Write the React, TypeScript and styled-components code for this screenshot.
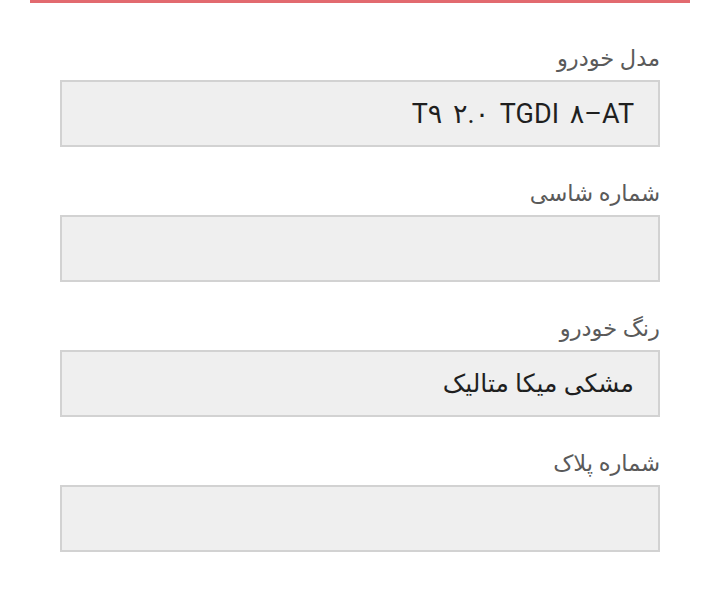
import React from 'react';
import styled, { createGlobalStyle } from 'styled-components';

const GlobalStyle = createGlobalStyle`
  html, body {
    margin: 0;
    padding: 0;
    background: #ffffff;
  }
  body {
    font-family: Roboto, "DejaVu Sans", sans-serif;
  }
`;

const Page = styled.div`
  width: 720px;
  min-height: 612px;
  background: #ffffff;
  direction: rtl;
`;

const TopRule = styled.div`
  height: 3px;
  margin: 0 30px;
  background: #e26a6f;
`;

const Form = styled.div`
  display: flex;
  flex-direction: column;
  gap: 30px;
  padding: 39px 60px 0;
`;

const Field = styled.div`
  display: flex;
  flex-direction: column;
  gap: 6px;
`;

const Label = styled.label`
  display: block;
  height: 32px;
  line-height: 32px;
  font-size: 22.5px;
  color: #5a5a5a;
  text-align: right;
`;

const Box = styled.div`
  box-sizing: border-box;
  height: 67px;
  display: flex;
  align-items: center;
  padding: 0 24px;
  background: #efefef;
  border: 2px solid #d2d2d2;
  color: #1f1f1f;
`;

const Value = styled.span<{ $ltr?: boolean }>`
  direction: ${(p) => (p.$ltr ? 'ltr' : 'rtl')};
  unicode-bidi: isolate;
  font-size: ${(p) => (p.$ltr ? '27px' : '25px')};
  word-spacing: ${(p) => (p.$ltr ? '4px' : '0')};
`;

interface FieldData {
  label: string;
  value: string;
  ltr?: boolean;
}

const fields: FieldData[] = [
  { label: 'مدل خودرو', value: 'T۹ ۲.۰ TGDI ۸–AT', ltr: true },
  { label: 'شماره شاسی', value: '' },
  { label: 'رنگ خودرو', value: 'مشکی میکا متالیک' },
  { label: 'شماره پلاک', value: '' },
];

const App: React.FC = () => {
  return (
    <Page>
      <GlobalStyle />
      <TopRule />
      <Form>
        {fields.map((f) => (
          <Field key={f.label}>
            <Label>{f.label}</Label>
            <Box>{f.value && <Value $ltr={f.ltr}>{f.value}</Value>}</Box>
          </Field>
        ))}
      </Form>
    </Page>
  );
};

export default App;
